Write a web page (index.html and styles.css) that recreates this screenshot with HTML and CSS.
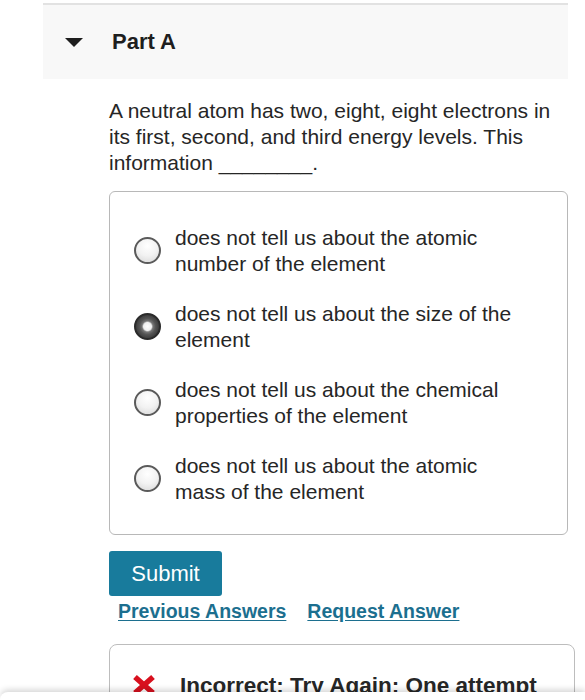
FILE: index.html
```html
<!DOCTYPE html>
<html lang="en">
<head>
<meta charset="utf-8">
<title>Part A</title>
<link rel="stylesheet" href="styles.css">
</head>
<body>
<div class="page">
  <div class="part-header">
    <span class="caret"></span>
    <h2 class="part-title">Part A</h2>
  </div>
  <div class="part-body">
    <p class="question">A neutral atom has two, eight, eight electrons in its first, second, and third energy levels. This information ________.</p>
    <div class="options">
      <label class="option"><span class="radio"></span><span class="opt-text">does not tell us about the atomic number of the element</span></label>
      <label class="option"><span class="radio radio-on"></span><span class="opt-text">does not tell us about the size of the element</span></label>
      <label class="option"><span class="radio"></span><span class="opt-text">does not tell us about the chemical properties of the element</span></label>
      <label class="option"><span class="radio"></span><span class="opt-text">does not tell us about the atomic mass of the element</span></label>
    </div>
    <button class="submit">Submit</button>
    <div class="links">
      <a class="link" href="#">Previous Answers</a>
      <a class="link" href="#">Request Answer</a>
    </div>
    <div class="feedback">
      <svg class="xmark" width="24" height="22" viewBox="0 0 24 22"><path d="M3 3 L21 19 M21 3 L3 19" stroke="#d8101e" stroke-width="5.5" stroke-linecap="butt"/></svg>
      <span class="fb-text">Incorrect; Try Again; One attempt remaining</span>
    </div>
  </div>
</div>
<div class="sheet"></div>
</body>
</html>
```
FILE: styles.css
```css
html, body {
  margin: 0;
  padding: 0;
  background: #fff;
}
body {
  font-family: "Liberation Sans", Arial, sans-serif;
  color: #262626;
  overflow: hidden;
  height: 700px;
}
.page {
  padding-top: 3px;
  height: 697px;
  overflow: hidden;
}
.part-header {
  margin-left: 43px;
  width: 525px;
  height: 74px;
  border-top: 2px solid #e2e2e2;
  background: #f8f8f8;
  display: flex;
  align-items: center;
}
.caret {
  width: 0;
  height: 0;
  margin-left: 22px;
  border-left: 9px solid transparent;
  border-right: 9px solid transparent;
  border-top: 9px solid #1e1e1e;
}
.part-title {
  margin: 0 0 0 29px;
  font-size: 22px;
  font-weight: bold;
  color: #1e1e1e;
}
.part-body {
  margin-left: 109px;
  width: 459px;
}
.question {
  margin: 19px 0 15px;
  font-size: 21px;
  line-height: 26px;
}
.options {
  border: 1px solid #b8b8b8;
  border-radius: 6px;
  padding: 33px 30px 29px 24px;
  display: flex;
  flex-direction: column;
  gap: 24px;
}
.option {
  display: flex;
  align-items: center;
  gap: 14px;
  font-size: 21px;
  line-height: 26px;
}
.opt-text {
  max-width: 350px;
}
.radio {
  flex: none;
  width: 23px;
  height: 23px;
  border-radius: 50%;
  border: 2px solid #5a5a5a;
  background: radial-gradient(circle at 50% 30%, #ffffff 0%, #f2f2f2 50%, #d6d6d6 100%);
  margin-top: -2px;
}
.radio-on {
  border-color: #2a2a2a;
  background: radial-gradient(circle at 50% 50%, #ffffff 0, #f0f0f0 4px, #777 5.5px, #555 8px, #3a3a3a 12px);
}
.submit {
  display: block;
  margin-top: 16px;
  width: 113px;
  height: 45px;
  border: 0;
  border-radius: 3px;
  background: #187b9c;
  color: #fff;
  font-family: "Liberation Sans", Arial, sans-serif;
  font-size: 22px;
  padding: 0;
}
.links {
  display: flex;
  gap: 21px;
  margin-left: 9px;
  margin-top: 4px;
}
.link {
  font-size: 19.5px;
  line-height: 22px;
  font-weight: bold;
  color: #1c6f8f;
  text-decoration: underline;
  text-underline-offset: 2px;
}
.feedback {
  margin-top: 22px;
  width: 466px;
  height: 90px;
  box-sizing: border-box;
  border: 1px solid #bdbdbd;
  border-radius: 8px;
  padding: 27px 20px 0 22px;
  display: flex;
  align-items: flex-start;
  gap: 24px;
  overflow: hidden;
}
.xmark {
  flex: none;
  margin-top: 2px;
}
.fb-text {
  font-size: 22.5px;
  font-weight: bold;
  color: #262626;
  line-height: 27px;
}
.sheet {
  position: absolute;
  left: 0;
  right: 0;
  top: 692px;
  height: 8px;
  background: #fff;
  border-top-left-radius: 16px;
  box-shadow: 0 -2px 6px rgba(0, 0, 0, 0.18);
}
```
